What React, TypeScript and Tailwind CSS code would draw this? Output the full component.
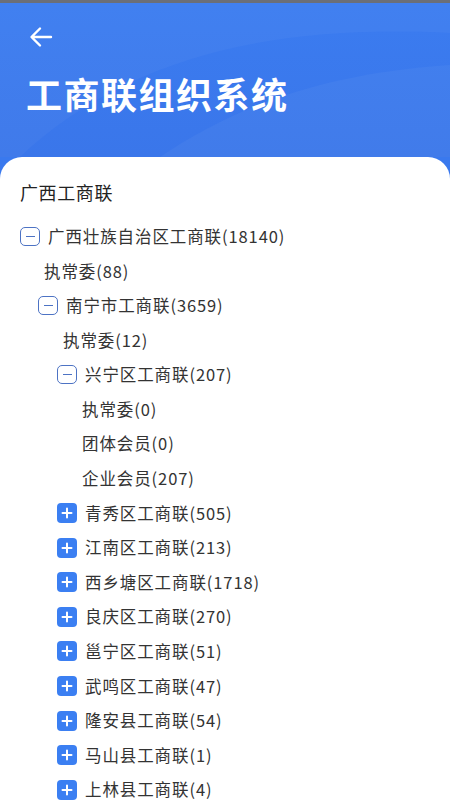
type Node = { label: string; depth: number; kind: "open" | "closed" | "leaf" };

const rows: Node[] = [
  { label: "广西壮族自治区工商联(18140)", depth: 0, kind: "open" },
  { label: "执常委(88)", depth: 0, kind: "leaf" },
  { label: "南宁市工商联(3659)", depth: 1, kind: "open" },
  { label: "执常委(12)", depth: 1, kind: "leaf" },
  { label: "兴宁区工商联(207)", depth: 2, kind: "open" },
  { label: "执常委(0)", depth: 2, kind: "leaf" },
  { label: "团体会员(0)", depth: 2, kind: "leaf" },
  { label: "企业会员(207)", depth: 2, kind: "leaf" },
  { label: "青秀区工商联(505)", depth: 2, kind: "closed" },
  { label: "江南区工商联(213)", depth: 2, kind: "closed" },
  { label: "西乡塘区工商联(1718)", depth: 2, kind: "closed" },
  { label: "良庆区工商联(270)", depth: 2, kind: "closed" },
  { label: "邕宁区工商联(51)", depth: 2, kind: "closed" },
  { label: "武鸣区工商联(47)", depth: 2, kind: "closed" },
  { label: "隆安县工商联(54)", depth: 2, kind: "closed" },
  { label: "马山县工商联(1)", depth: 2, kind: "closed" },
  { label: "上林县工商联(4)", depth: 2, kind: "closed" },
];

const indent = ["pl-[20px]", "pl-[38px]", "pl-[57px]"];
const leafIndent = ["pl-[44px]", "pl-[63px]", "pl-[82px]"];

function Toggle({ open }: { open: boolean }) {
  if (open) {
    return (
      <span className="w-[20px] h-[19px] rounded-[5px] border-[1.5px] border-[#4d73c4] flex items-center justify-center shrink-0">
        <span className="w-[9px] h-[1.5px] bg-[#4d73c4]" />
      </span>
    );
  }
  return (
    <span className="w-[20px] h-[20px] rounded-[4px] bg-[#3b7ff2] flex items-center justify-center shrink-0">
      <svg width="12" height="12" viewBox="0 0 12 12" fill="none">
        <path d="M6 1.5v9M1.5 6h9" stroke="white" strokeWidth="2" strokeLinecap="round" />
      </svg>
    </span>
  );
}

function TreeRow({ node }: { node: Node }) {
  const text = <span className="text-[16.5px] tracking-[0.9px] text-[#333]">{node.label}</span>;
  if (node.kind === "leaf") {
    return <div className={`h-[34.6px] flex items-center ${leafIndent[node.depth]}`}>{text}</div>;
  }
  return (
    <div className={`h-[34.6px] flex items-center gap-[8px] ${indent[node.depth]}`}>
      <Toggle open={node.kind === "open"} />
      {text}
    </div>
  );
}

export default function App() {
  return (
    <div
      className="w-[450px] h-[800px] overflow-hidden bg-[#3a79ee] flex flex-col"
      style={{ fontFamily: '"Noto Sans CJK SC", "Noto Sans", sans-serif' }}
    >
      <div className="h-[3px] shrink-0 bg-[#6b6f78]" />
      <div className="relative shrink-0 h-[154px] bg-gradient-to-b from-[#3b7cf0] to-[#3a76ea]">
        <svg className="absolute inset-0" width="450" height="154" viewBox="0 0 450 154" fill="none">
          <path d="M20 154 C120 60 260 20 450 30 L450 0 L0 0 L0 154 Z" fill="#ffffff" fillOpacity="0.03" />
          <path d="M160 154 C240 100 330 70 450 62 L450 154 Z" fill="#ffffff" fillOpacity="0.04" />
        </svg>
        <div className="relative pl-[29px] pt-[23px]">
          <svg width="24" height="22" viewBox="0 0 24 22" fill="none">
            <path d="M22 11H3M11 2.5L2.5 11l8.5 8.5" stroke="white" strokeWidth="2.4" strokeLinecap="round" strokeLinejoin="round" />
          </svg>
        </div>
        <h1 className="relative pl-[26px] mt-[23px] text-[36px] leading-[44px] font-bold text-white tracking-[1.5px]">
          工商联组织系统
        </h1>
      </div>
      <div className="flex-1 bg-white rounded-t-[22px] pt-[23px]">
        <div className="pl-[20px] text-[18px] leading-[24px] tracking-[0.6px] text-[#222]">广西工商联</div>
        <div className="mt-[15px]">
          {rows.map((n, i) => (
            <TreeRow key={i} node={n} />
          ))}
        </div>
      </div>
    </div>
  );
}
